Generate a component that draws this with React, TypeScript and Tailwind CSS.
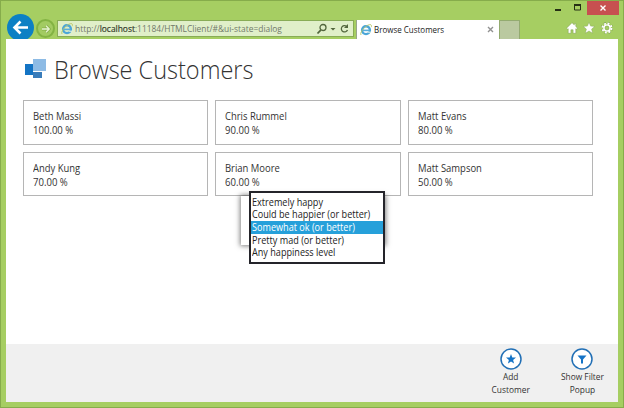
import React from "react";

const customers = [
  { name: "Beth Massi", score: "100.00 %" },
  { name: "Chris Rummel", score: "90.00 %" },
  { name: "Matt Evans", score: "80.00 %" },
  { name: "Andy Kung", score: "70.00 %" },
  { name: "Brian Moore", score: "60.00 %" },
  { name: "Matt Sampson", score: "50.00 %" },
];

const levels = [
  "Extremely happy",
  "Could be happier (or better)",
  "Somewhat ok (or better)",
  "Pretty mad (or better)",
  "Any happiness level",
];

function ExplorerIcon() {
  return (
    <svg className="h-3 w-3 shrink-0" viewBox="0 0 12 12" fill="none">
      <circle cx="6" cy="6.2" r="3.9" stroke="#4ba6d8" strokeWidth="2.4" />
      <path d="M3 6.4h6.6" stroke="#58addb" strokeWidth="1.6" />
      <path d="M8 8.2h3" stroke="#eef7e5" strokeWidth="1" />
      <path d="M1 11C-1 8.500 7-.8 11 .8c.9.500.500 1.700.200 2.400" stroke="#b9c766" strokeWidth=".9" />
    </svg>
  );
}

function Chrome() {
  return (
    <header className="relative flex h-[38px] shrink-0 items-end">
      <div className="ml-[6px] -mb-[2px] flex h-[27px] w-[27px] shrink-0 items-center justify-center rounded-full bg-[#0c80c4]">
        <svg className="h-[17px] w-[17px]" viewBox="0 0 17 17" fill="none" stroke="white" strokeWidth="2.6">
          <path d="M16 8.500H3M8.500 2.500l-6 6 6 6" />
        </svg>
      </div>
      <div className="mb-[1px] ml-[2px] flex h-[19px] w-[19px] shrink-0 items-center justify-center rounded-full border-2 border-[#83b343] bg-[#a2cb62]">
        <svg className="h-[10px] w-[10px]" viewBox="0 0 10 10" fill="none">
          <path d="M1 5h7M5 1.800L8.200 5 5 8.200" stroke="#86b049" strokeWidth="3" />
          <path d="M1 5h7M5 1.800L8.200 5 5 8.200" stroke="#e6f3cf" strokeWidth="1.300" />
        </svg>
      </div>
      <div className="mb-[2px] ml-[2px] flex h-[17px] w-[297px] shrink-0 items-center border border-[#88ac56] bg-[#e0efc9] pr-[3px] pl-[3px]">
        <ExplorerIcon />
        <span className="ml-[2px] w-[234px] origin-left scale-x-[0.885] text-[9.500px] leading-none whitespace-pre text-[#71796a]">
          http://<span className="text-[#333b2b] [-webkit-text-stroke:0.2px]">localhost</span>:11184/HTMLClient/#&amp;ui-state=dialog
        </span>
        <svg className="ml-auto h-[12px] w-[34px] shrink-0" viewBox="0 0 34 12" fill="none" stroke="#52663d" strokeWidth="1.300">
          <circle cx="7" cy="4.500" r="3" />
          <path d="M5 6.800L1.500 10.500" strokeWidth="1.800" />
          <path d="M14.500 5h5L17 7.500z" fill="#52663d" stroke="none" />
          <path d="M30.500 3.200A3.200 3.200 0 1 0 31.500 7" />
          <path d="M32 1v4h-4z" fill="#52663d" stroke="none" />
        </svg>
      </div>
      <div className="ml-[2px] flex h-[19px] w-[143px] shrink-0 items-center border-l border-[#98a58b] bg-white pr-[5px] pl-[3px]">
        <ExplorerIcon />
        <span className="ml-[2px] w-[84px] origin-left scale-x-[0.84] text-[9.500px] leading-none whitespace-nowrap text-[#222]">Browse Customers</span>
        <svg className="ml-auto h-[7px] w-[7px]" viewBox="0 0 7 7" stroke="#929292" strokeWidth="1.400">
          <path d="M1 1l5 5M6 1L1 6" />
        </svg>
      </div>
      <div className="h-[19px] w-[21px] shrink-0 border border-b-0 border-[#93ab70] bg-[#bac9a0]" />
      <div className="mb-[5px] ml-[46px] flex gap-[5px]">
        <svg className="h-[12px] w-[12px]" viewBox="0 0 12 12" fill="white" stroke="#7e9e50" strokeWidth=".5">
          <path d="M6 .700L.500 6.200l1 1 .700-.500V11.300h2.700V7.800h2.200v3.500h2.700V6.700l.700.500 1-1L9.800 4.500V1.500H8.300v1.400z" />
        </svg>
        <svg className="h-[12px] w-[12px]" viewBox="0 0 12 12" fill="white" stroke="#7e9e50" strokeWidth=".4">
          <path d="M6 .300l1.600 3.800 4.200.300-3.200 2.700 1 4.100L6 9l-3.600 2.200 1-4.100L.200 4.400l4.200-.300z" />
        </svg>
        <svg className="ml-[1px] h-[12px] w-[12px]" viewBox="0 0 12 12" fill="none">
          <circle cx="6" cy="6" r="4.500" stroke="#7e9e50" strokeWidth="3" strokeDasharray="2.100 1.434" />
          <circle cx="6" cy="6" r="4.500" stroke="white" strokeWidth="2" strokeDasharray="1.900 1.634" />
          <circle cx="6" cy="6" r="3" stroke="white" strokeWidth="1.700" />
          <circle cx="6" cy="6" r="2" stroke="#7e9e50" strokeWidth=".5" />
        </svg>
      </div>
      <div className="absolute top-0 right-[4px] flex h-[14px]">
        <svg className="h-[14px] w-[32px]" viewBox="0 0 32 14">
          <path d="M0 8h6v2H0z" fill="#263015" />
          <path d="M19.500 4h6v5h-6z" fill="none" stroke="#263015" />
          <path d="M19 3h7v2h-7z" fill="#263015" />
        </svg>
        <div className="flex w-[32px] items-center justify-center bg-[#c75050]">
          <svg className="h-[6px] w-[6px]" viewBox="0 0 6 6" stroke="white" strokeWidth="1.400">
            <path d="M.500.500l5 5M5.500.500l-5 5" />
          </svg>
        </div>
      </div>
    </header>
  );
}

function FilterMenu() {
  return (
    <>
      <div className="absolute top-[195px] left-[240px] h-[49px] w-[144px] bg-white shadow-[0_0_5px_1px_rgba(0,0,0,0.5)]" />
      <div className="absolute top-[190px] left-[248px] h-[73px] w-[136px] border-2 border-[#24242a] bg-white pt-[2.500px]">
        {levels.map((level, i) => (
          <div
            key={level}
            className={
              i === 2
                ? "h-[13px] bg-[#26a0da] pl-[0.500px] text-[10px] leading-[13px] whitespace-nowrap text-white"
                : "h-[12.500px] pl-[0.500px] text-[10px] leading-[12px] whitespace-nowrap text-[#222]"
            }
          >
            <span className="inline-block origin-left scale-x-[0.91]">{level}</span>
          </div>
        ))}
      </div>
    </>
  );
}

export default function App() {
  return (
    <div className="relative flex h-[408px] w-[624px] flex-col overflow-hidden border border-[#86ac4b] bg-[#a6ce62] font-['Open_Sans','Noto_Sans',sans-serif]">
      <Chrome />
      <main className="relative ml-[5px] flex h-[363px] w-[612px] shrink-0 flex-col bg-white">
        <div className="flex h-[61px] items-start pl-[18px]">
          <svg className="mt-[19px] h-[22px] w-[23px]" viewBox="0 0 23 22">
            <path d="M1 6h8v11H1z" fill="#1474c4" />
            <path d="M9 1h13v12H9z" fill="#8dbbe5" />
            <path d="M9 14h9v6H9z" fill="#397cba" />
          </svg>
          <h1 className="mt-[12px] ml-[7px] origin-left scale-x-[0.94] text-[25px] leading-[36px] font-light whitespace-nowrap text-[#333]">Browse Customers</h1>
        </div>
        <div className="ml-[17px] grid w-[570px] grid-cols-3 gap-x-[7px] gap-y-[7px]">
          {customers.map((c) => (
            <div key={c.name} className="h-[44.500px] border border-[#b5b5b5] pt-[8px] pl-[9px] text-[10.500px] leading-[14px] text-[#333]">
              <div className="origin-left scale-x-[0.9]">{c.name}</div>
              <div className="origin-left scale-x-[0.91]">{c.score}</div>
            </div>
          ))}
        </div>
        <footer className="mt-auto flex h-[58px] justify-end bg-[#f0f0f0] pt-[4px] text-center text-[9.500px] leading-[13px] text-[#333]">
          <button className="flex w-[71px] flex-col items-center">
            <svg className="h-[22px] w-[22px] shrink-0" viewBox="0 0 22 22">
              <circle cx="11" cy="11" r="10" fill="white" stroke="#216fb5" strokeWidth="1.500" />
              <path d="M11 6l1.300 3.400 3.700.200-2.900 2.300 1 3.600-3.100-2-3.100 2 1-3.600L6 9.600l3.700-.200z" fill="#1473c6" />
            </svg>
            <span className="scale-x-[0.88]">Add<br />Customer</span>
          </button>
          <button className="flex w-[72px] flex-col items-center">
            <svg className="h-[22px] w-[22px] shrink-0" viewBox="0 0 22 22">
              <circle cx="11" cy="11" r="10" fill="white" stroke="#216fb5" strokeWidth="1.500" />
              <path d="M6.500 7.500h9l-3.500 4v4h-2v-4z" fill="#1473c6" />
            </svg>
            <span className="scale-x-[0.88]">Show Filter<br />Popup</span>
          </button>
        </footer>
      </main>
      <FilterMenu />
    </div>
  );
}
